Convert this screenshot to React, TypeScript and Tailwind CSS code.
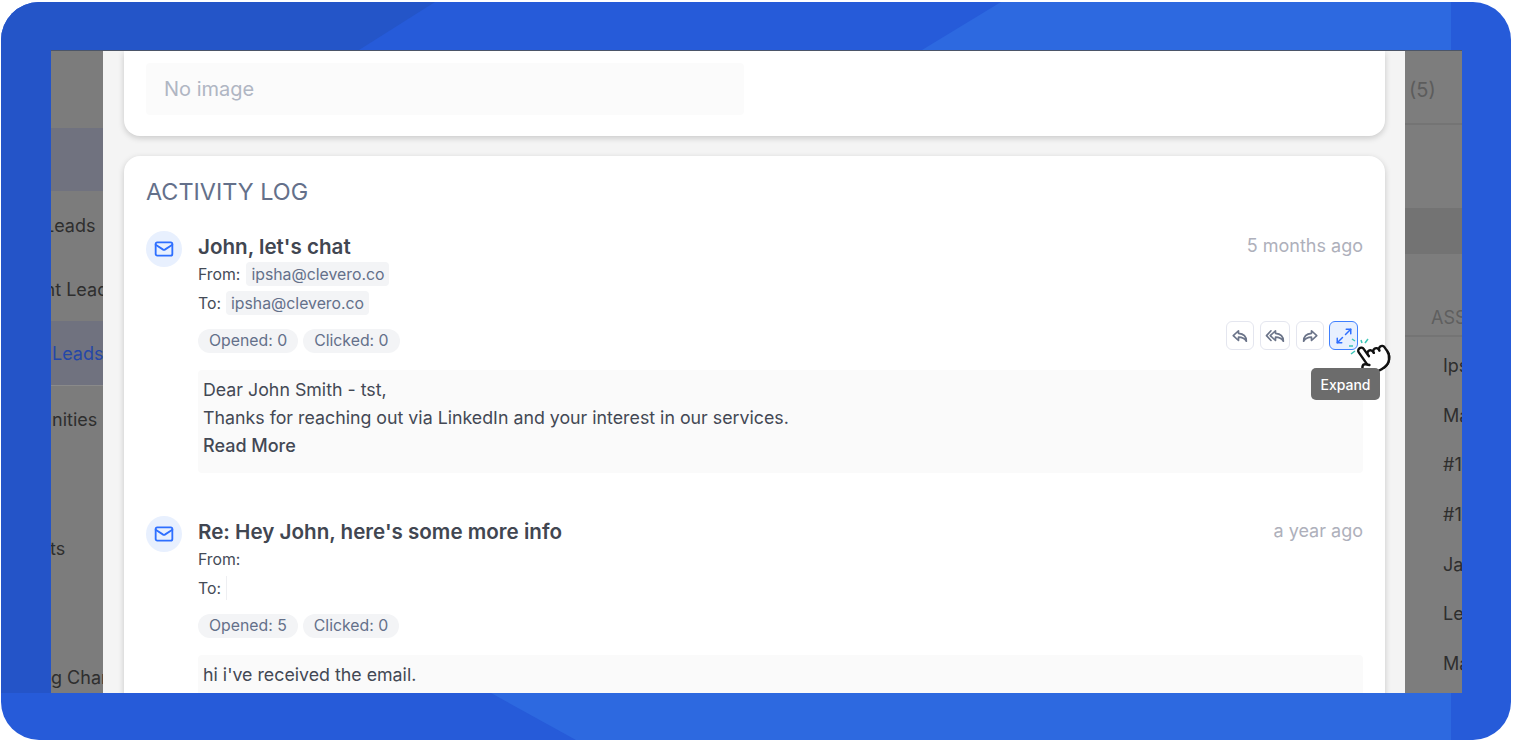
import React from "react";
import { Mail, Maximize2, Pointer } from "lucide-react";

const Chip = ({ children }: { children: React.ReactNode }) => (
    <span className="h-[24px] px-[5px] rounded bg-[#f3f4f6] text-[#64708a] text-[15.8px] leading-[25px]">{children}</span>
);

const Pill = ({ children }: { children: React.ReactNode }) => (
    <span className="h-[24px] px-[11px] rounded-full bg-[#f3f4f6] text-[#64708a] text-[15.8px] leading-[24px]">{children}</span>
);

const ReplyIcon = () => (
    <svg width="18" height="18" viewBox="0 0 24 24" fill="none" stroke="currentColor" strokeWidth="2.2" strokeLinejoin="round">
        <path d="M10 5L3 11.5l7 6.5v-4.5c4.5 0 8 1 10.5 5.5 0-6-3.5-10-10.5-10.5z" />
    </svg>
);

const ReplyAllIcon = () => (
    <svg width="21" height="18" viewBox="0 0 28 24" fill="none" stroke="currentColor" strokeWidth="2.2" strokeLinejoin="round" strokeLinecap="round">
        <path d="M8 5L2 11.5 8 18" />
        <path d="M14 5L7 11.5l7 6.5v-4.5c4.5 0 8 1 10.5 5.5 0-6-3.5-10-10.5-10.5z" />
    </svg>
);

const ForwardIcon = () => (
    <svg width="18" height="18" viewBox="0 0 24 24" fill="none" stroke="currentColor" strokeWidth="2.2" strokeLinejoin="round">
        <path d="M14 5l7 6.5-7 6.5v-4.5c-4.5 0-8 1-10.5 5.5 0-6 3.5-10 10.5-10.5z" />
    </svg>
);

function EmailActions() {
    const btn = "h-[29px] flex items-center justify-center rounded-md border border-[#e4e6ef] bg-white text-[#6b7489]";
    return (
        <div className="relative flex gap-[6px] -mt-[8px] mr-[5px] h-[29px]">
            <div className={btn + " w-[28px]"}><ReplyIcon /></div>
            <div className={btn + " w-[30px]"}><ReplyAllIcon /></div>
            <div className={btn + " w-[28px]"}><ForwardIcon /></div>
            <div className="w-[29px] h-[29px] -ml-[1px] flex items-center justify-center rounded-md border border-[#3f80ff] bg-[#e8f0fe] text-[#2e6fff]">
                <Maximize2 size={18} />
            </div>

            {/* click sparks + cursor */}
            <svg className="absolute left-[122px] top-[16px]" width="24" height="24" viewBox="0 0 24 24" stroke="#3cc6b8" strokeWidth="1.5">
                <path d="M4 2l3 2M1 9h4M3 17l4-3M13 3l1 3M20 2l-3 4" />
            </svg>
            <Pointer className="absolute left-[129px] top-[18px] -rotate-[35deg]" size={36} fill="#ffffff" stroke="#111111" strokeWidth={1.6} />

            <div className="absolute left-[85px] top-[47px] w-[69px] h-[32px] rounded-[5px] bg-[#6c6c6c] text-white text-[14px] font-medium flex items-center justify-center">
                Expand
            </div>
        </div>
    );
}

function LogItem({ title, date, from, to, opened, actions, children }: {
    title: string;
    date: string;
    from?: string;
    to?: string;
    opened: number;
    actions?: boolean;
    children: React.ReactNode;
}) {
    return (
        <div className="flex gap-4">
            <div className="w-[36px] h-[36px] rounded-full bg-[#e8f0fe] flex items-center justify-center shrink-0">
                <Mail size={20} strokeWidth={2.2} className="text-[#2e6fff]" />
            </div>
            <div className="flex-1 min-w-0">
                <div className="h-[31px] flex justify-between items-start">
                    <span className="text-[20.6px] leading-[32px] font-semibold text-[#414651]">{title}</span>
                    <span className="text-[18px] leading-[29px] text-[#aeb0bb]">{date}</span>
                </div>
                <div className="h-[24px] flex items-center gap-[6px] text-[15.8px] leading-[25px] text-[#444b57]">
                    <span>From:</span>
                    {from && <Chip>{from}</Chip>}
                </div>
                <div className="h-[24px] mt-[5px] flex items-center gap-[5px] text-[15.8px] leading-[25px] text-[#444b57]">
                    <span>To:</span>
                    {to ? <Chip>{to}</Chip> : <span className="h-[24px] border-l border-[#eeeff2]" />}
                </div>
                <div className="mt-[14px] flex justify-between items-start h-[24px]">
                    <div className="flex gap-[5px]">
                        <Pill>Opened: {opened}</Pill>
                        <Pill>Clicked: 0</Pill>
                    </div>
                    {actions && <EmailActions />}
                </div>
                <div className="mt-[17px] rounded bg-[#fafafa] pl-[5px] pr-[6px] pt-[6px] pb-[13px] text-[17.8px] leading-[28px] text-[#434854]">
                    {children}
                </div>
            </div>
        </div>
    );
}

function LeftNav() {
    const row = "flex items-center whitespace-nowrap text-[18px] text-[#2e2e2e]";
    return (
        <div className="w-[52px] h-full shrink-0 overflow-hidden bg-[#7c7c7c]">
            <div className="h-[77px]" />
            <div className="h-[63px] bg-[#70727f]" />
            <div className={row + " h-[65px] pt-[3px]"}><span className="-ml-[7px]">Leads</span></div>
            <div className={row + " h-[65px] pt-[1px]"}><span className="-ml-[49px]">Recent Leads</span></div>
            <div className="h-[65px] flex items-center whitespace-nowrap text-[18px] text-[#2447a8] bg-[#70727f] border-b border-[#8a8a8a]">
                <span className="ml-[1px]">Leads</span>
            </div>
            <div className={row + " h-[64px] mt-[1px]"}><span className="ml-[1px]">nities</span></div>
            <div className="h-[65px]" />
            <div className={row + " h-[64px]"}><span className="-ml-[1px]">ts</span></div>
            <div className="h-[64px]" />
            <div className={row + " h-[64px] pt-[2px]"}><span>g Charts</span></div>
        </div>
    );
}

function RightPanel() {
    const names = ["Ipsha", "Mark", "#1204", "#1187", "Jason", "Leah", "Maya"];
    return (
        <div className="w-[57px] h-full shrink-0 overflow-hidden bg-[#7d7d7d] whitespace-nowrap text-[18px] text-[#2e2e2e]">
            <div className="h-[74px] pt-[27px] pl-[4px] border-b-2 border-[#747474] text-[20px] text-[#5c5c5c] leading-[24px]">(5)</div>
            <div className="h-[83px]" />
            <div className="h-[46px] bg-[#737373]" />
            <div className="h-[83px] pt-[53px] pl-[26px] border-b-2 border-[#747474] text-[#5f5f5f] leading-[22px]">ASSIGNED</div>
            <div className="pt-[4px]">
                {names.map((n) => (
                    <div key={n} className="h-[49.6px] pl-[38px] flex items-center">{n}</div>
                ))}
            </div>
        </div>
    );
}

export default function App() {
    return (
        <div className="h-[740px] w-full bg-white pt-[2px] pl-[1px] pr-[3px] overflow-hidden font-['Inter',sans-serif]">
            <div className="relative h-[738px] rounded-[38px] overflow-hidden bg-[#265bd9] pl-[50px] pr-[49px] pt-[48px]">
                {/* backdrop shapes */}
                <svg className="absolute inset-0" width="1510" height="738" viewBox="0 0 1510 738">
                    <polygon points="0,0 434,0 358,48 0,48" fill="#2455c8" />
                    <rect x="0" y="48" width="50" height="643" fill="#2454c8" />
                    <polygon points="1000,0 1450,0 1450,48 921,48" fill="#2d69e0" />
                    <polygon points="490,691 1450,691 1450,738 575,738" fill="#2d69e0" />
                </svg>

                <div className="relative flex h-[643px] overflow-hidden border-t border-[#4b5568]">
                    <LeftNav />

                    <div className="flex-1 min-w-0 h-full overflow-hidden bg-[#f4f4f4] pl-[21px] pr-[20px]">
                        <div className="h-[85px] rounded-b-2xl bg-white shadow-[0_2px_6px_rgba(0,0,0,0.18)] pl-[22px] pt-[12px]">
                            <div className="w-[598px] h-[52px] rounded bg-[#fbfbfb] px-[18px] text-[20px] leading-[52px] text-[#b0b6c3]">
                                No image
                            </div>
                        </div>

                        <div className="mt-[20px] rounded-t-2xl bg-white shadow-[0_2px_6px_rgba(0,0,0,0.18)] px-[22px] pt-[20px] h-[560px]">
                            <h2 className="text-[23.4px] leading-[32px] text-[#64708a] mb-[23px]">ACTIVITY LOG</h2>
                            <div className="flex flex-col gap-[43px]">
                                <LogItem title="John, let's chat" date="5 months ago" from="ipsha@clevero.co" to="ipsha@clevero.co" opened={0} actions>
                                    <p>Dear John Smith - tst,</p>
                                    <p>Thanks for reaching out via LinkedIn and your interest in our services.</p>
                                    <p className="font-medium text-[18px]">Read More</p>
                                </LogItem>
                                <LogItem title="Re: Hey John, here's some more info" date="a year ago" opened={5}>
                                    <p>hi i've received the email.</p>
                                </LogItem>
                            </div>
                        </div>
                    </div>

                    <RightPanel />
                </div>
            </div>
        </div>
    );
}
